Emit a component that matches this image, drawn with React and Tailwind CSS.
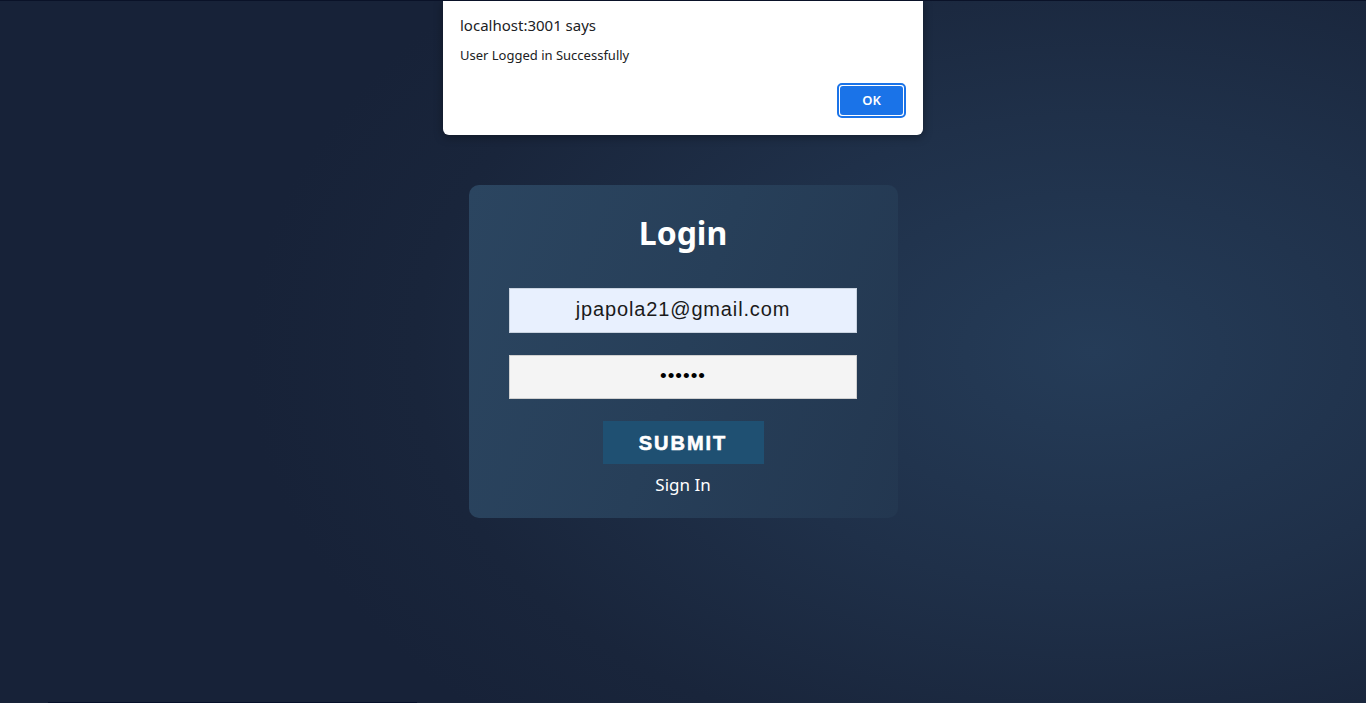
export default function App() {
  return (
    <div
      className="relative h-[703px] w-full overflow-hidden border-t border-[#0a1228]"
      style={{
        background:
          "radial-gradient(ellipse 62% 75% at 80% 50%, #253c58 0%, #1f3049 45%, #19253b 80%, #172238 100%)",
      }}
    >
      {/* alert dialog */}
      <div className="absolute left-[443px] top-0 h-[134px] w-[480px] rounded-b-[6px] bg-white px-[17px] pt-[13px] shadow-[0_2px_10px_rgba(0,0,0,0.35)] font-['Noto_Sans',sans-serif]">
        <p className="text-[15px] leading-[22px] text-[#202124]">localhost:3001 says</p>
        <p className="mt-[10px] text-[13px] leading-[18px] text-[#202124]">User Logged in Successfully</p>
        <div className="mt-[19px] flex justify-end">
          <button className="h-[35px] w-[69px] rounded-[5px] border-2 border-[#1a73e8] bg-white p-[1px]">
            <span className="flex h-full w-full items-center justify-center rounded-[3px] bg-[#1a73e8] text-[13px] font-semibold text-white">
              OK
            </span>
          </button>
        </div>
      </div>

      <div className="flex justify-center pt-[184px]">
        <div
          className="flex w-[429px] flex-col items-center rounded-[10px] pb-[21px] pt-[26px] font-['Noto_Sans',sans-serif]"
          style={{ background: "linear-gradient(110deg, #2b4560 0%, #273f59 50%, #233750 100%)" }}
        >
          <h1 className="text-[32px] font-bold leading-[44px] text-white">Login</h1>
          <input
            readOnly
            value="jpapola21@gmail.com"
            className="mt-[33px] h-[45px] w-[348px] border border-[#c9d3e0] bg-[#e8f0fe] pb-[3px] text-center text-[20px] tracking-[0.85px] text-[#1a1a1a] outline-none font-['Liberation_Sans',sans-serif]"
          />
          <input
            readOnly
            type="password"
            value="123456"
            className="mt-[22px] h-[44px] w-[348px] border border-[#d0d0d0] bg-[#f4f4f4] pb-[3px] text-center text-[19px] tracking-[1px] text-black outline-none font-['Liberation_Sans',sans-serif]"
          />
          <button className="mt-[22px] h-[43px] w-[161px] bg-[#1f5072] text-[20px] font-black tracking-[2px] text-white font-['Liberation_Sans',sans-serif] [-webkit-text-stroke:0.6px_white]">
            SUBMIT
          </button>
          <p className="mt-[9px] text-[17px] leading-[24px] text-white">Sign In</p>
        </div>
      </div>

      <div className="absolute bottom-0 left-[48px] h-[1px] w-[369px] bg-[#06102a]" />
    </div>
  );
}
